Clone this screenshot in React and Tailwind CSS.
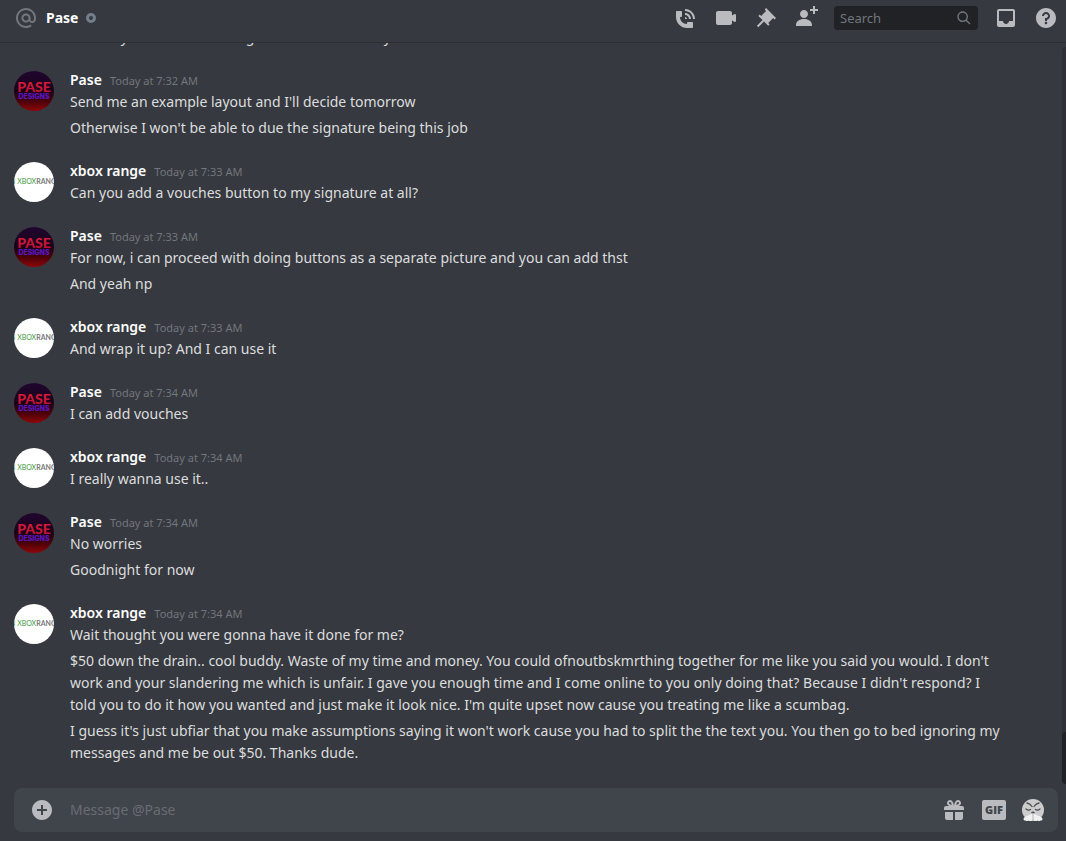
import React from "react";

const groups = [
  {
    lines: ["Honestly I'm not even doing these for the money"],
  },
  {
    author: "pase",
    time: "Today at 7:32 AM",
    lines: [
      "Send me an example layout and I'll decide tomorrow",
      "Otherwise I won't be able to due the signature being this job",
    ],
  },
  {
    author: "xbox",
    time: "Today at 7:33 AM",
    lines: ["Can you add a vouches button to my signature at all?"],
  },
  {
    author: "pase",
    time: "Today at 7:33 AM",
    lines: [
      "For now, i can proceed with doing buttons as a separate picture and you can add thst",
      "And yeah np",
    ],
  },
  {
    author: "xbox",
    time: "Today at 7:33 AM",
    lines: ["And wrap it up? And I can use it"],
  },
  {
    author: "pase",
    time: "Today at 7:34 AM",
    lines: ["I can add vouches"],
  },
  {
    author: "xbox",
    time: "Today at 7:34 AM",
    lines: ["I really wanna use it.."],
  },
  {
    author: "pase",
    time: "Today at 7:34 AM",
    lines: ["No worries", "Goodnight for now"],
  },
  {
    author: "xbox",
    time: "Today at 7:34 AM",
    lines: [
      "Wait thought you were gonna have it done for me?",
      "$50 down the drain.. cool buddy. Waste of my time and money. You could ofnoutbskmrthing together for me like you said you would. I don't work and your slandering me which is unfair. I gave you enough time and I come online to you only doing that? Because I didn't respond? I told you to do it how you wanted and just make it look nice. I'm quite upset now cause you treating me like a scumbag.",
      "I guess it's just ubfiar that you make assumptions saying it won't work cause you had to split the the text you. You then go to bed ignoring my messages and me be out $50. Thanks dude.",
    ],
  },
];

const names = { pase: "Pase", xbox: "xbox range" };

const icons = {
  at: "M12 2C6.486 2 2 6.486 2 12C2 17.515 6.486 22 12 22C14.039 22 15.993 21.398 17.652 20.259L16.521 18.611C15.195 19.519 13.633 20 12 20C7.589 20 4 16.411 4 12C4 7.589 7.589 4 12 4C16.411 4 20 7.589 20 12V12.782C20 14.17 19.402 15 18.4 15L18.398 15.018C18.338 15.005 18.273 15 18.209 15H18C17.437 15 16.6 14.182 16.6 13.631V12C16.6 9.464 14.537 7.4 12 7.4C9.463 7.4 7.4 9.463 7.4 12C7.4 14.537 9.463 16.6 12 16.6C13.234 16.6 14.35 16.106 15.177 15.313C15.826 16.269 16.93 17 18 17L18.002 16.981C18.064 16.994 18.129 17 18.195 17H18.4C20.552 17 22 15.306 22 12.782V12C22 6.486 17.514 2 12 2ZM12 14.599C10.566 14.599 9.4 13.433 9.4 11.999C9.4 10.565 10.566 9.399 12 9.399C13.434 9.399 14.6 10.565 14.6 11.999C14.6 13.433 13.434 14.599 12 14.599Z",
  call: "M11 5V3C16.515 3 21 7.486 21 13H19C19 8.589 15.411 5 11 5ZM17 13H15C15 10.795 13.206 9 11 9V7C14.309 7 17 9.691 17 13ZM11 11V13H13C13 11.896 12.105 11 11 11ZM14 16H18C18.553 16 19 16.447 19 17V21C19 21.553 18.553 22 18 22H13C6.925 22 2 17.075 2 11V6C2 5.448 2.448 5 3 5H7C7.553 5 8 5.448 8 6V10C8 10.552 7.553 11 7 11H6C6.063 14.938 9 18 13 18V17C13 16.447 13.447 16 14 16Z",
  video:
    "M21.526 8.149C21.231 7.966 20.862 7.951 20.553 8.105L18 9.382V7C18 5.897 17.103 5 16 5H4C2.897 5 2 5.897 2 7V17C2 18.104 2.897 19 4 19H16C17.103 19 18 18.104 18 17V14.618L20.553 15.894C20.694 15.965 20.847 16 21 16C21.183 16 21.365 15.949 21.526 15.851C21.82 15.668 22 15.347 22 15V9C22 8.653 21.82 8.332 21.526 8.149Z",
  pin: "M22 12L12.101 2.101L10.686 3.514L12.101 4.929L7.151 9.878V9.88L5.736 8.465L4.322 9.88L8.565 14.122L2.908 19.778L4.322 21.192L9.979 15.536L14.222 19.778L15.636 18.364L14.222 16.95L19.171 12H19.172L20.586 13.414L22 12Z",
  addUser:
    "M21 3H24V5H21V8H19V5H16V3H19V0H21V3ZM10 12C12.205 12 14 10.205 14 8C14 5.795 12.205 4 10 4C7.795 4 6 5.795 6 8C6 10.205 7.795 12 10 12ZM10 13C5.289 13 2 15.467 2 19V20H18V19C18 15.467 14.711 13 10 13Z",
  search:
    "M21.707 20.293L16.314 14.9C17.403 13.504 18 11.799 18 10C18 7.863 17.167 5.854 15.656 4.344C14.146 2.832 12.137 2 10 2C7.863 2 5.854 2.832 4.344 4.344C2.833 5.854 2 7.863 2 10C2 12.137 2.833 14.146 4.344 15.656C5.854 17.168 7.863 18 10 18C11.799 18 13.504 17.404 14.9 16.314L20.293 21.706L21.707 20.293ZM10 16C8.397 16 6.891 15.376 5.758 14.243C4.624 13.11 4 11.603 4 10C4 8.398 4.624 6.891 5.758 5.758C6.891 4.624 8.397 4 10 4C11.603 4 13.109 4.624 14.242 5.758C15.376 6.891 16 8.398 16 10C16 11.603 15.376 13.11 14.242 14.243C13.109 15.376 11.603 16 10 16Z",
  inbox:
    "M19 3H4.99C3.88 3 3.01 3.89 3.01 5L3 19C3 20.1 3.88 21 4.99 21H19C20.1 21 21 20.1 21 19V5C21 3.89 20.1 3 19 3ZM19 15H15C15 16.66 13.65 18 12 18C10.35 18 9 16.66 9 15H4.99V5H19V15Z",
  help: "M12 2C6.486 2 2 6.487 2 12C2 17.515 6.486 22 12 22C17.514 22 22 17.515 22 12C22 6.487 17.514 2 12 2ZM12 18.25C11.31 18.25 10.75 17.691 10.75 17C10.75 16.31 11.31 15.75 12 15.75C12.69 15.75 13.25 16.31 13.25 17C13.25 17.691 12.69 18.25 12 18.25ZM13 13.875V15H11V12H12C13.104 12 14 11.103 14 10C14 8.896 13.104 8 12 8C10.896 8 10 8.896 10 10H8C8 7.795 9.795 6 12 6C14.205 6 16 7.795 16 10C16 11.861 14.723 13.429 13 13.875Z",
  plus: "M12 2C6.486 2 2 6.487 2 12C2 17.515 6.486 22 12 22C17.514 22 22 17.515 22 12C22 6.487 17.514 2 12 2ZM17 13H13V17H11V13H7V11H11V7H13V11H17V13Z",
  gift: "M16.886 8H20C21.104 8 22 8.896 22 10V12H2V10C2 8.896 2.897 8 4 8H7.114C6.663 7.764 6.236 7.477 5.879 7.121C4.709 5.951 4.709 4.048 5.879 2.879C7.012 1.746 8.986 1.746 10.121 2.877C11.758 4.514 11.979 7.595 12 7.98C12.021 7.595 12.242 4.514 13.879 2.877C15.014 1.746 16.988 1.746 18.121 2.879C19.291 4.048 19.291 5.951 18.121 7.121C17.764 7.477 17.337 7.764 16.886 8ZM7.293 5.707C6.903 5.316 6.903 4.682 7.293 4.292C7.481 4.103 7.732 4 8 4C8.268 4 8.519 4.103 8.707 4.292C9.297 4.882 9.641 5.94 9.825 6.822C8.945 6.639 7.879 6.293 7.293 5.707ZM14.174 6.824C14.359 5.941 14.702 4.883 15.293 4.293C15.481 4.103 15.732 4 16 4C16.268 4 16.519 4.103 16.706 4.291C17.096 4.682 17.097 5.316 16.707 5.707C16.116 6.298 15.057 6.642 14.174 6.824ZM3 14H11V22H5C3.896 22 3 21.104 3 20V14ZM13 14H21V20C21 21.104 20.104 22 19 22H13V14Z",
};

const Icon = ({ name, className = "w-6 h-6" }) => (
  <svg viewBox="0 0 24 24" className={className} aria-hidden="true">
    <path fill="currentColor" fillRule="evenodd" d={icons[name]} />
  </svg>
);

const IconButton = ({ name, label }) => (
  <button aria-label={label} className="shrink-0 text-[#b9bbbe] hover:text-white">
    <Icon name={name} />
  </button>
);

const PaseAvatar = () => (
  <svg viewBox="0 0 40 40" className="w-10 h-10 rounded-full" role="img" aria-label="Pase">
    <defs>
      <linearGradient id="paseBg" x1="0" y1="0" x2="0" y2="1">
        <stop offset="0" stopColor="#20062f" />
        <stop offset="0.5" stopColor="#1b0218" />
        <stop offset="0.75" stopColor="#4a0207" />
        <stop offset="1" stopColor="#8e070c" />
      </linearGradient>
      <linearGradient id="paseText" x1="0" y1="0" x2="0" y2="1">
        <stop offset="0" stopColor="#e3203c" />
        <stop offset="1" stopColor="#b80f35" />
      </linearGradient>
    </defs>
    <rect width="40" height="40" fill="url(#paseBg)" />
    <text x="20" y="21" fontSize="14" fontWeight="900" textAnchor="middle" fontFamily="Lato, sans-serif" fill="url(#paseText)">
      PASE
    </text>
    <text x="20" y="28" fontSize="7" fontWeight="800" textAnchor="middle" fontFamily="Inter, sans-serif" fill="#5a18c4">
      DESIGNS
    </text>
  </svg>
);

const XboxAvatar = () => (
  <svg viewBox="0 0 40 40" className="w-10 h-10 rounded-full" role="img" aria-label="xbox range">
    <rect width="40" height="40" fill="#fff" />
    <text x="-4" y="22" fontSize="7" fontFamily="Lato, sans-serif" fill="#3f9a3c">
      N XBOX
      <tspan fontWeight="700" fill="#777777">
        RANGE
      </tspan>
    </text>
  </svg>
);

const AngryFace = () => (
  <svg viewBox="0 0 22 22" className="w-[22px] h-[22px]" aria-hidden="true">
    <circle cx="11" cy="11" r="11" fill="#cccccc" />
    <g fill="none" stroke="#4b4d50" strokeWidth="1.3" strokeLinecap="round">
      <path d="M5 4Q8 4.500 10 7.500" />
      <path d="M17 4Q14 4.500 12 7.500" />
      <path d="M4 10Q6.500 11.800 8.500 10.500" />
      <path d="M18 10Q15.500 11.800 13.500 10.500" />
      <path d="M9.800 13.800Q11 12.600 12.200 13.800" />
    </g>
    <path
      fill="#f0f0f0"
      d="M10 14.500Q10.500 18 10 21.500Q8 22.500 6.500 21.500Q5 22.500 3.500 21.500Q1.500 22 1.500 20Q1.500 18 3.500 18Q4.500 16.200 6 16.800Q7.500 15.500 10 14.500ZM12 14.500Q11.500 18 12 21.500Q14 22.500 15.500 21.500Q17 22.500 18.500 21.500Q20.500 22 20.500 20Q20.500 18 18.500 18Q17.500 16.200 16 16.800Q14.500 15.500 12 14.500Z"
    />
  </svg>
);

const Message = ({ group }) => (
  <li className="flex gap-4">
    <div className={group.author ? "mt-0.5 w-10 h-10 shrink-0" : "w-10 shrink-0"}>
      {group.author === "pase" && <PaseAvatar />}
      {group.author === "xbox" && <XboxAvatar />}
    </div>
    <div className="flex-1 min-w-0">
      {group.author && (
        <h2 className="flex items-baseline gap-2 h-[22px] leading-[22px]">
          <span className="font-semibold text-white">{names[group.author]}</span>
          <time className="text-[11px] leading-4 font-normal text-[#72767d]">{group.time}</time>
        </h2>
      )}
      <div className="flex flex-col gap-1">
        {group.lines.map((line, i) => (
          <p key={i} className="leading-[22px]">
            {line}
          </p>
        ))}
      </div>
    </div>
  </li>
);

const App = () => {
  return (
    <div className="flex flex-col h-screen overflow-hidden bg-[#36393f] text-sm text-[#dcddde] font-['Noto_Sans',sans-serif]">
      {/* Header */}
      <header className="shrink-0 flex items-center gap-4 pt-1.5 pb-3 pl-3.5 pr-2 border-b border-[#2d2f34]">
        <div className="flex-1 flex items-center gap-2">
          <Icon name="at" className="w-6 h-6 text-[#72767d]" />
          <h1 className="font-bold leading-6 text-white">Pase</h1>
          <span className="w-2.5 h-2.5 rounded-full border-3 border-[#747f8d]" />
        </div>
        <IconButton name="call" label="Start Voice Call" />
        <IconButton name="video" label="Start Video Call" />
        <IconButton name="pin" label="Pinned Messages" />
        <IconButton name="addUser" label="Add Friends to DM" />
        <label className="w-36 h-6 flex items-center pl-1.5 pr-1.5 rounded bg-[#202225] text-[#72767d]">
          <input
            type="text"
            aria-label="Search"
            placeholder="Search"
            className="flex-1 min-w-0 bg-transparent text-[13px] leading-5 outline-none placeholder:text-[#72767d]"
          />
          <Icon name="search" className="w-4 h-4" />
        </label>
        <IconButton name="inbox" label="Inbox" />
        <IconButton name="help" label="Help" />
      </header>

      {/* Messages */}
      <main className="flex-1 min-h-0 flex">
        <ul className="flex-1 min-w-0 flex flex-col justify-end gap-[21px] pl-3.5 pr-14 pb-6 overflow-hidden">
          {groups.map((group, i) => (
            <Message key={i} group={group} />
          ))}
        </ul>
        <div className="w-1 mt-1 mb-1 flex flex-col justify-end rounded-l bg-[#2f3136]">
          <div className="h-[52px] rounded-l bg-[#202225]" />
        </div>
      </main>

      {/* Message box */}
      <form className="shrink-0 flex items-center gap-4 h-11 ml-3.5 mr-2 mb-[9px] pl-4 pr-3.5 rounded-lg bg-[#40444b]">
        <IconButton name="plus" label="Upload a file" />
        <input
          type="text"
          aria-label="Message @Pase"
          placeholder="Message @Pase"
          className="flex-1 min-w-0 bg-transparent leading-[22px] outline-none placeholder:text-[#686c73]"
        />
        <IconButton name="gift" label="Send a gift" />
        <button className="w-6 h-5 rounded-xs bg-[#b9bbbe] text-[11px] leading-5 font-extrabold font-['Open_Sans',sans-serif] text-[#40444b]">
          GIF
        </button>
        <button aria-label="Pick an emoji">
          <AngryFace />
        </button>
      </form>
    </div>
  );
};

export default App;
